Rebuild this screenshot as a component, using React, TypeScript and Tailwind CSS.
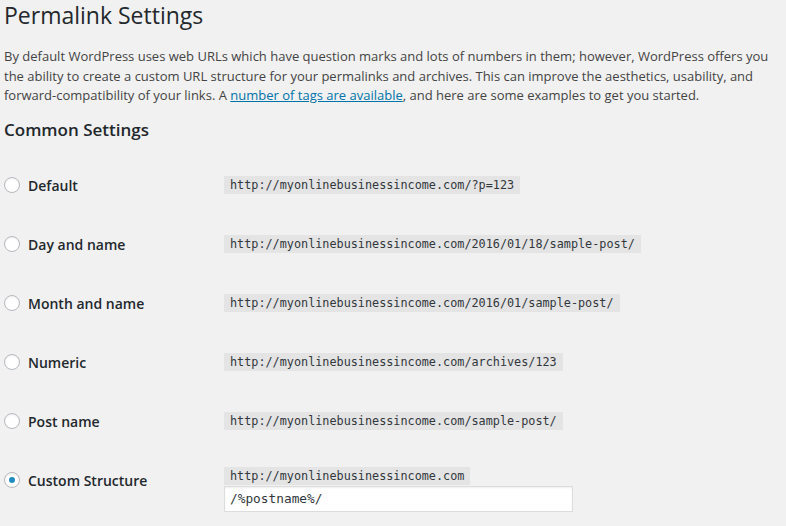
import React from 'react';

const rows = [
  { label: 'Default', url: 'http://myonlinebusinessincome.com/?p=123' },
  { label: 'Day and name', url: 'http://myonlinebusinessincome.com/2016/01/18/sample-post/' },
  { label: 'Month and name', url: 'http://myonlinebusinessincome.com/2016/01/sample-post/' },
  { label: 'Numeric', url: 'http://myonlinebusinessincome.com/archives/123' },
  { label: 'Post name', url: 'http://myonlinebusinessincome.com/sample-post/' },
];

const mono = "font-['DejaVu_Sans_Mono',monospace]";

function Radio({ checked = false }: { checked?: boolean }) {
  return (
    <span className="flex h-4 w-4 shrink-0 items-center justify-center rounded-full border border-[#b4b9be] bg-white shadow-[inset_0_1px_2px_rgba(0,0,0,0.07)]">
      {checked && <span className="h-[6px] w-[6px] rounded-full bg-[#1e8cbe]" />}
    </span>
  );
}

function Code({ children }: { children: React.ReactNode }) {
  return (
    <code className={`${mono} inline-block bg-[#e4e4e4] px-[6px] py-[2px] text-[11.8px] leading-[14px] text-[#32373c]`}>
      {children}
    </code>
  );
}

export default function App() {
  return (
    <div className="min-h-[526px] w-[786px] overflow-hidden bg-[#f1f1f1] pl-[4px] font-['Open_Sans',sans-serif] text-[#444]">
      <h1 className="pt-[1px] text-[23px] leading-[29px] font-normal text-[#23282d]">Permalink Settings</h1>

      <p className="mt-[17px] w-[780px] text-[13px] leading-[19.5px]">
        By default WordPress uses web URLs which have question marks and lots of numbers in them; however, WordPress offers you
        the ability to create a custom URL structure for your permalinks and archives. This can improve the aesthetics, usability, and
        forward-compatibility of your links. A{' '}
        <a href="#" className="text-[#0073aa] underline">number of tags are available</a>, and here are some examples to get you started.
      </p>

      <h2 className="mt-[13px] text-[17px] leading-[22px] font-semibold text-[#23282d]">Common Settings</h2>

      <div className="mt-[15px] flex flex-col">
        {rows.map((r) => (
          <div key={r.label} className="flex h-[59px] items-center">
            <div className="flex w-[220px] items-center gap-[8px]">
              <Radio />
              <span className="text-[14px] font-semibold text-[#23282d]">{r.label}</span>
            </div>
            <Code>{r.url}</Code>
          </div>
        ))}
        <div className="flex h-[59px] items-start">
          <div className="mt-[19px] flex w-[220px] items-center gap-[8px]">
            <Radio checked />
            <span className="text-[14px] font-semibold text-[#23282d]">Custom Structure</span>
          </div>
          <div className="mt-[16px] flex flex-col items-start">
            <Code>http://myonlinebusinessincome.com</Code>
            <div className={`${mono} mt-[1px] flex h-[26px] w-[349px] items-center border border-[#ddd] bg-white px-[5px] text-[12.8px] text-[#32373c] shadow-[inset_0_1px_2px_rgba(0,0,0,0.07)]`}>
              /%postname%/
            </div>
          </div>
        </div>
      </div>
    </div>
  );
}
